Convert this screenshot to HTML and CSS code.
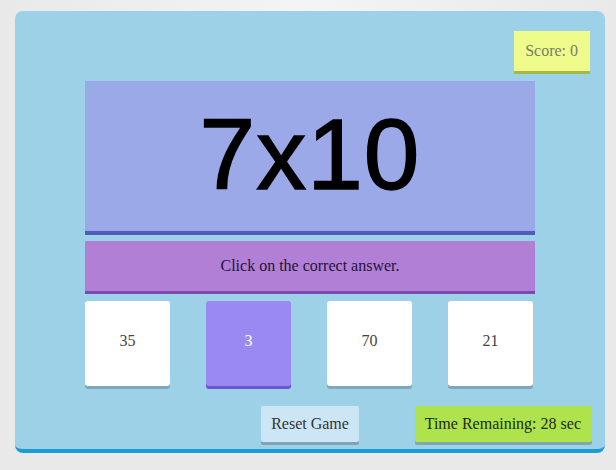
FILE: index.html
```html
<!DOCTYPE html>
<html>
<head>
<meta charset="utf-8">
<link rel="stylesheet" href="styles.css">
</head>
<body>
<div class="game">
  <div class="score-row">
    <div class="score">Score: 0</div>
  </div>
  <div class="question">7x10</div>
  <div class="instruction">Click on the correct answer.</div>
  <div class="answers">
    <div class="answer">35</div>
    <div class="answer selected">3</div>
    <div class="answer">70</div>
    <div class="answer">21</div>
  </div>
  <div class="controls">
    <div class="reset">Reset Game</div>
    <div class="timer">Time Remaining: 28 sec</div>
  </div>
</div>
</body>
</html>
```

FILE: styles.css
```css
html, body {
  margin: 0;
  padding: 0;
}
body {
  background: radial-gradient(ellipse at 50% 0%, #f4f4f4 0%, #e9e9e9 70%);
  min-height: 470px;
  padding-top: 11px;
  box-sizing: border-box;
  font-family: "Liberation Serif", "Times New Roman", serif;
  font-size: 16px;
}
.game {
  margin-left: 15px;
  width: 590px;
  background: #9dd1e8;
  border-radius: 8px;
  border-bottom: 4px solid #1a9bd7;
  padding: 20px 0 7px;
  box-sizing: border-box;
  display: flex;
  flex-direction: column;
}
.score-row {
  display: flex;
  justify-content: flex-end;
  padding-right: 15px;
}
.score {
  height: 40px;
  line-height: 40px;
  padding: 0 12px 0 11px;
  background: #effc8c;
  color: #7a7a6a;
  box-shadow: 0 3px 0 #a6b846;
}
.question {
  margin: 10px auto 0;
  width: 450px;
  background: #9ba9e8;
  border-bottom: 4px solid #4f5cb8;
  display: flex;
  align-items: center;
  justify-content: center;
  font-family: "Comic Sans MS", "Liberation Sans", Arial, sans-serif;
  font-size: 100px;
  letter-spacing: 1px;
  line-height: 1;
  color: #000;
  -webkit-text-stroke: 1.5px #000;
  padding-bottom: 4px;
  box-sizing: content-box;
  height: 146px;
}
.instruction {
  margin: 6px auto 0;
  width: 450px;
  height: 50px;
  line-height: 50px;
  text-align: center;
  background: #b27fd6;
  border-bottom: 3px solid #7a4aad;
  color: #241436;
}
.answers {
  margin: 7px auto 0;
  width: 450px;
  display: flex;
  gap: 36px;
}
.answer {
  width: 85px;
  height: 85px;
  line-height: 80px;
  text-align: center;
  background: #ffffff;
  border-radius: 3px;
  box-shadow: 0 3px 0 #7fa8bb;
  color: #444;
}
.answer.selected {
  background: #9b89f2;
  box-shadow: 0 3px 0 #6a55d2;
  color: #ffffff;
}
.controls {
  margin-top: 20px;
  display: grid;
  grid-template-columns: 1fr auto 1fr;
  align-items: start;
}
.reset {
  grid-column: 2;
  height: 36px;
  line-height: 36px;
  padding: 0 10px;
  background: #cde6f5;
  color: #333;
  border-radius: 2px;
  box-shadow: 0 3px 0 #7fa3b7;
}
.timer {
  grid-column: 3;
  justify-self: end;
  margin-right: 13px;
  height: 36px;
  line-height: 36px;
  padding: 0 11px 0 10px;
  background: #aee34b;
  color: #1c2a10;
  border-radius: 2px;
  box-shadow: 0 3px 0 #7fa6b3;
}
```
